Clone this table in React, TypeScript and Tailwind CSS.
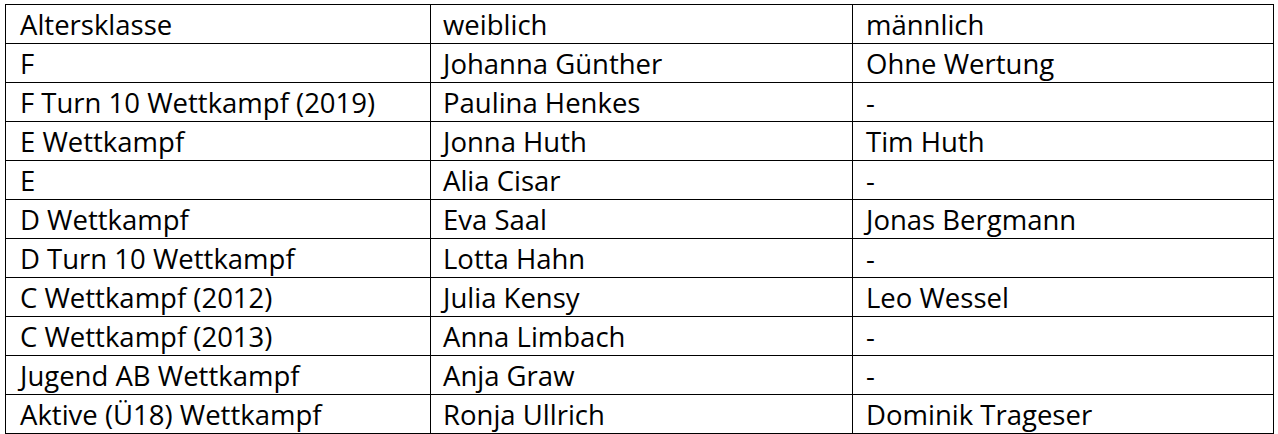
import React from 'react';

const rows: [string, string, string][] = [
  ['Altersklasse', 'weiblich', 'männlich'],
  ['F', 'Johanna Günther', 'Ohne Wertung'],
  ['F Turn 10 Wettkampf (2019)', 'Paulina Henkes', '-'],
  ['E Wettkampf', 'Jonna Huth', 'Tim Huth'],
  ['E', 'Alia Cisar', '-'],
  ['D Wettkampf', 'Eva Saal', 'Jonas Bergmann'],
  ['D Turn 10 Wettkampf', 'Lotta Hahn', '-'],
  ['C Wettkampf (2012)', 'Julia Kensy', 'Leo Wessel'],
  ['C Wettkampf (2013)', 'Anna Limbach', '-'],
  ['Jugend AB Wettkampf', 'Anja Graw', '-'],
  ['Aktive (Ü18) Wettkampf', 'Ronja Ullrich', 'Dominik Trageser'],
];

export default function App() {
  return (
    <div className="bg-white w-[1278px] h-[434px] pt-[4px] pl-[5px]" style={{ fontFamily: '"Open Sans", sans-serif' }}>
      <table className="border-collapse w-[1268px] table-fixed text-black text-[27.5px]">
        <colgroup>
          <col className="w-[425px]" />
          <col className="w-[422px]" />
          <col className="w-[421px]" />
        </colgroup>
        <tbody>
          {rows.map((r, i) => (
            <tr key={i} className="h-[39px]">
              <td className="border border-black pl-[14px] pt-[2px] pb-0 leading-[36px] whitespace-nowrap">{r[0]}</td>
              <td className="border border-black pl-[12px] pt-[2px] pb-0 leading-[36px] whitespace-nowrap">{r[1]}</td>
              <td className="border border-black pl-[13px] pt-[2px] pb-0 leading-[36px] whitespace-nowrap">{r[2]}</td>
            </tr>
          ))}
        </tbody>
      </table>
    </div>
  );
}
